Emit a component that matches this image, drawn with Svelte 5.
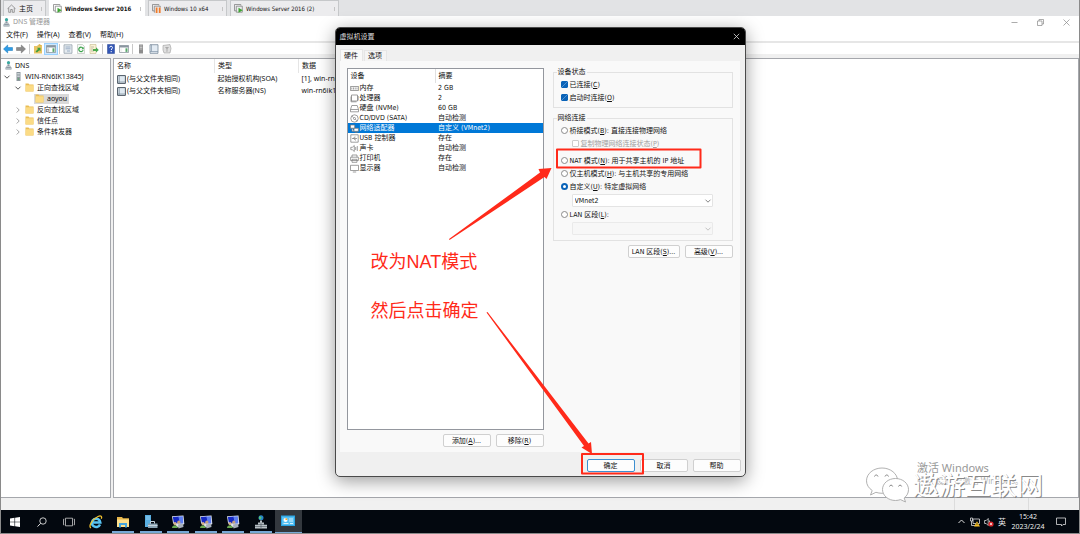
<script lang="ts">
  interface Device {
    icon: string;
    name: string;
    summary: string;
  }

  const vmTabs = [
    { title: "Windows Server 2016", state: "run" },
    { title: "Windows 10 x64", state: "pause" },
    { title: "Windows Server 2016 (2)", state: "run" },
  ];
  const menus = ["文件(F)", "操作(A)", "查看(V)", "帮助(H)"];
  const zones = ["反向查找区域", "信任点", "条件转发器"];
  const records = [
    { type: "起始授权机构(SOA)", data: "[1], win-rn6ik13845j" },
    { type: "名称服务器(NS)", data: "win-rn6ik13845j" },
  ];
  const tools = ["back", "forward", "|", "up", "pane", "|", "props", "refresh", "export", "|", "help", "pane2", "|", "server", "sheet", "filter"];
  const devices: Device[] = [
    { icon: "memory", name: "内存", summary: "2 GB" },
    { icon: "cpu", name: "处理器", summary: "2" },
    { icon: "disk", name: "硬盘 (NVMe)", summary: "60 GB" },
    { icon: "cd", name: "CD/DVD (SATA)", summary: "自动检测" },
    { icon: "net", name: "网络适配器", summary: "自定义 (VMnet2)" },
    { icon: "usb", name: "USB 控制器", summary: "存在" },
    { icon: "sound", name: "声卡", summary: "自动检测" },
    { icon: "printer", name: "打印机", summary: "存在" },
    { icon: "display", name: "显示器", summary: "自动检测" },
  ];
  const apps = ["ie", "explorer", "manager", "rdp", "rdp", "rdp", "dns", "panel"];

  let selected = $state(4);
  let activeTab = $state(0);
  let network = $state("custom");
  let connected = $state(true);
  let connectAtPowerOn = $state(true);
</script>

{#snippet key(text: string, letter: string, tail = "")}
  <span>{text}(<u>{letter}</u>){tail}</span>
{/snippet}

{#snippet chevron()}
  <svg class="chevron" viewBox="0 0 8 8"><path d="M1.5 2.7 4 5.2l2.5-2.5" /></svg>
{/snippet}

{#snippet folder()}
  <svg class="i9" viewBox="0 0 9 9"><path d="M.5.5h3l.8 1H8.500v7H.5z" fill="#e9bd55" /><path d="M1 2.300h7.500v6H.5z" fill="#fbdb85" /></svg>
{/snippet}

{#snippet dnsIcon()}
  <svg class="i9" viewBox="0 0 9 9">
    <circle cx="4.500" cy="1.700" r="1.600" fill="#3ba8a0" />
    <path d="M3.500 3.300h2v1.500h1v1.500h1V8.500h-6V6.300h1V4.800h1z" fill="#8a97a0" />
    <path d="M3 5.500h3M2 7.400h5" stroke="#dfe5e8" stroke-width=".6" />
  </svg>
{/snippet}

{#snippet serverIcon()}
  <svg class="i9" viewBox="0 0 9 9"><path d="M2.500 0h4v9h-4z" fill="#8d979d" /><path d="M3.200 1.500h2.600M3.200 3h2.600M3.200 4.500h2.600" stroke="#e4e9ec" stroke-width=".7" /><circle cx="4.500" cy="7" r=".7" fill="#58b368" /></svg>
{/snippet}

{#snippet toolIcon(name: string)}
  <svg class="i10" viewBox="0 0 10 10">
    {#if name === "back"}
      <path d="M.5 5 4.700 1v2.500h4.800v3H4.700V9z" fill="#2d9be6" stroke="#1677b8" stroke-width=".5" />
    {:else if name === "forward"}
      <path d="M9.500 5 5.300 1v2.500H.5v3h4.800V9z" fill="#8b8b8b" stroke="#6d6d6d" stroke-width=".5" />
    {:else if name === "up"}
      <path d="M1 2h3l1-1h4v8.500H1z" fill="#e8c464" /><path d="M2.500 7.500 5 5l-1-1.200h3.500V7.300l-1.200-1L4 8.600z" fill="#3e9d3e" /><path d="m5 1 2-1 1 2" fill="#d9a938" />
    {:else if name === "pane" || name === "pane2"}
      <path d="M.5 1.500h9v7h-9z" fill="#fff" stroke="#7f8b94" stroke-width=".7" /><path d="M.5 1.500h9v2h-9z" fill="#8a96a0" />
      <path d="M1.200 4.300h2v3.600h-2z" fill={name === "pane" ? "#c2cbd1" : "#f1f1f1"} /><path d="M6.500 4.300h2v3.600h-2z" fill="#59a86b" />
    {:else if name === "props"}
      <path d="M1 .8h8v8.500H1z" fill="#e4eaef" stroke="#8c99a5" stroke-width=".7" /><path d="M2.500 3h5M2.500 4.800h5M4 7h3" stroke="#7c97b5" stroke-width=".7" />
    {:else if name === "refresh"}
      <path d="M1.500.5h5l2 2v7h-7z" fill="#f6f8f6" stroke="#b2bbb2" stroke-width=".6" /><path d="M7 4.500a2.200 2.200 0 1 0 .1 1.600" fill="none" stroke="#39a34a" stroke-width="1.200" /><path d="M7.700 3v2.200H5.500z" fill="#39a34a" />
    {:else if name === "export"}
      <path d="M1 .5h6v9H1z" fill="#fbf3d5" stroke="#c4b98c" stroke-width=".6" /><path d="M2 3h3M2 5h2M2 7h3" stroke="#9a9a8a" stroke-width=".6" /><path d="M4 5h3V3.300L9.800 6 7 8.500V7H4z" fill="#4aaa4f" />
    {:else if name === "help"}
      <path d="M1.500.5h7v9h-7z" fill="#3155b5" stroke="#23408f" stroke-width=".5" /><path d="M3.700 3.600c0-1.900 2.800-1.800 2.800 0 0 1.100-1.300 1.200-1.300 2.400M5.200 7v1.200" fill="none" stroke="#fff" stroke-width="1" />
    {:else if name === "server"}
      <path d="M3 .5h4v9H3z" fill="#8c8c8c" /><path d="M3.600 2h2.800M3.600 3.500h2.800M3.600 5h2.800" stroke="#ddd" stroke-width=".7" />
    {:else if name === "sheet"}
      <path d="M1 .7h8v8.600H1z" fill="#e3ebf3" stroke="#66788b" stroke-width=".7" /><path d="M1 7.500h8M2.500.7v6.800" stroke="#8395a8" stroke-width=".7" />
    {:else}
      <path d="M1 1.500 8 .5l1 4-1 4.500H2L1 6z" fill="#dedede" stroke="#9c9c9c" stroke-width=".6" /><path d="M3 3h4L5.500 5v2.500l-1 .5V5z" fill="#aaa" />
    {/if}
  </svg>
{/snippet}

{#snippet deviceIcon(name: string)}
  <svg class="i9 line" viewBox="0 0 9 9">
    {#if name === "memory"}
      <path d="M.4 2.500h8.200v4H.4zM1.800 3.500v2M3.500 3.500v2M5.200 3.500v2M7 3.500v2" />
    {:else if name === "cpu"}
      <path d="M1.500 1h6v6h-6zM1 2.500v5.300h5.500M8.200 2v4.500" />
    {:else if name === "disk"}
      <path d="M.5 5.500h8v2.300h-8zM.5 5.500l1.300-4h5.400l1.300 4" />
    {:else if name === "cd"}
      <circle cx="4.500" cy="4.500" r="3.700" /><circle cx="4.500" cy="4.500" r="1" /><path d="M2 2.200 3.700 3.800M5.300 5.200 7 6.900" />
    {:else if name === "net"}
      <path d="M.5 1h4.200v3.200H.5zM4 4.300h4.400v3H4zM2 4.300v3h2M5 8.400h2.500" fill="#fff" />
    {:else if name === "usb"}
      <path d="M.8.8h7.400v7.400H.8zM2 4.500h5M3.500 4.500l1-1.500h1M4 4.500l1 1.500h1" />
    {:else if name === "sound"}
      <path d="M.8 3.300h1.500l2-1.800v6l-2-1.800H.8zM5.700 3v3M7.300 2v5" />
    {:else if name === "printer"}
      <path d="M2 3.200V1h5v2.200M.6 3.200h7.800v3.300H.6zM2 5.300h5v3H2z" />
    {:else}
      <path d="M.5 1.300h8v5.200h-8zM2.800 8h3.400" />
    {/if}
  </svg>
{/snippet}

{#snippet appIcon(name: string)}
  <svg class="i14" viewBox="0 0 14 14">
    {#if name === "ie"}
      <path d="M11 9.500A4.200 4.200 0 1 1 11.300 7.400H4" fill="none" stroke="#58c4f3" stroke-width="2.500" />
      <path d="M2 12.800C-.8 12 2.500 4.500 9 1.500c3-1.300 4.200 0 3.300 2.200" fill="none" stroke="#f2c230" stroke-width="1.300" />
    {:else if name === "explorer"}
      <path d="M1 2h5l1 1.200h6V12H1z" fill="#e8b64a" /><path d="M1 4.500h12V12H1z" fill="#fde08c" /><path d="M3 8h8v4.500H9V10H5v2.500H3z" fill="#45a5dc" />
    {:else if name === "manager"}
      <path d="M1 0h6v12H1z" fill="#59aee0" /><path d="M2 2h4M2 4h4" stroke="#a9daf5" stroke-width=".7" /><path d="M4 8.500h9.500V13H4z" fill="#8aa2b2" /><path d="M6.500 8.500v-2h4v2M4 10.500h9.500" fill="none" stroke="#c5d3dc" />
    {:else if name === "rdp"}
      <path d="M1 1.200 12.500.5l.8 8.500L7 12.500 2 8z" fill="#dfe4ee" /><path d="m1.800 1.900 6-.4 1.400 6.500L3 8.500z" fill="#1528c4" /><path d="m7.300 1.500 4.500-.3.500 7.100-3 .5z" fill="#5c7df0" />
      <path d="M7 9.500 12 8.500l.5 3.500-5 1.500z" fill="#a8b0ba" /><circle cx="4" cy="8.500" r="1.600" fill="#d6b48c" /><path d="M1 13c0-3.700 5.700-3.700 5.700 0z" fill="#69a84f" /><circle cx="7.800" cy="7.200" r="1.600" fill="#c2a080" />
    {:else if name === "dns"}
      <circle cx="7" cy="2.700" r="2.500" fill="#2786c8" /><path d="M5.500 1.200 7.500 2l-1 2.500-1.700-1z" fill="#61c86a" />
      <path d="M6 5.500h2v2h2v2.200h3V13.500H1V9.700h3V7.500h2z" fill="#b9c1c6" /><path d="M3.500 9.500h7M1 11.500h12M7 7.500v5.500" stroke="#4c565c" stroke-width=".6" />
    {:else}
      <path d="M0 1.500h14v10.500H0z" fill="#2aa4e3" /><path d="M1 2.700h12v8.300H1z" fill="#58c2f5" /><circle cx="4.500" cy="6" r="2" fill="#fff" /><path d="M4.500 6V4a2 2 0 0 1 2 2z" fill="#f6a52a" /><path d="M8 5h4M8 7h4M2.500 9.500h5M9 9.500h3" stroke="#e8f8ff" stroke-width=".9" />
    {/if}
  </svg>
{/snippet}

<div class="desktop">
  <nav class="vm-tabs">
    <button class="vm-tab home">
      <svg class="i9" viewBox="0 0 9 9"><path d="M.5 4.700 4.500 1l4 3.700M1.700 4v4.300h2V5.500h1.600v2.800h2V4" fill="none" stroke="#777" stroke-width=".7" /></svg>
      <span>主页</span>
      <i class="grip"></i>
    </button>
    {#each vmTabs as tab, i}
      <button class="vm-tab vm{i}" class:current={i === 0}>
        <svg class="i9" viewBox="0 0 9 9">
          <path d="M2.300 6.800H.5V.5h6.300v1M2.300 2.200h6v6h-6z" fill="none" stroke="#777" stroke-width=".7" />
          {#if tab.state === "run"}
            <path d="m4.500 3.700 4.300 2.500-4.300 2.500z" fill="#3fa535" />
          {:else}
            <path d="M3 3.500h6V9H3z" fill="#ececee" /><path d="M3.700 3.500h1.800V9H3.700zM6.800 3.500h1.800V9H6.800z" fill="#ef7b2b" />
          {/if}
        </svg>
        <span>{tab.title}</span>
        <i class="grip"></i>
      </button>
    {/each}
  </nav>

  <main class="mmc">
    <header class="mmc-title">
      {@render dnsIcon()}
      <span class="mmc-name">DNS 管理器</span>
      <button class="win-btn" aria-label="最小化"><svg class="i9" viewBox="0 0 9 9"><path d="M1.500 4.500h6" /></svg></button>
      <button class="win-btn" aria-label="还原"><svg class="i9" viewBox="0 0 9 9"><path d="M1.500 3h4.500v4.500H1.500zM3 3V1.500h4.500V6H6" /></svg></button>
      <button class="win-btn" aria-label="关闭"><svg class="i9" viewBox="0 0 9 9"><path d="m1.500 1.500 6 6m0-6-6 6" /></svg></button>
    </header>
    <div class="menubar">
      {#each menus as menu}
        <button>{menu}</button>
      {/each}
    </div>
    <div class="toolbar">
      {#each tools as tool}
        {#if tool === "|"}
          <i class="sep"></i>
        {:else}
          <button class="tool" class:pressed={tool === "pane"} aria-label={tool}>{@render toolIcon(tool)}</button>
        {/if}
      {/each}
    </div>

    <div class="panes">
      <ul class="tree">
        <li class="lv0">{@render dnsIcon()}<span>DNS</span></li>
        <li class="lv1">{@render chevron()}{@render serverIcon()}<span>WIN-RN6IK13845J</span></li>
        <li class="lv2">{@render chevron()}{@render folder()}<span>正向查找区域</span></li>
        <li class="lv3"><span class="picked">{@render folder()}<span>aoyou</span></span></li>
        {#each zones as zone}
          <li class="lv2 closed">{@render chevron()}{@render folder()}<span>{zone}</span></li>
        {/each}
      </ul>
      <div class="records">
        <table>
          <thead>
            <tr><th class="c-name">名称</th><th class="c-type">类型</th><th>数据</th></tr>
          </thead>
          <tbody>
            {#each records as record}
              <tr>
                <td><span class="cell"><svg class="i9" viewBox="0 0 9 9"><path d="M.6.6h7.800v7.800H.6z" fill="#dfe9f1" stroke="#4b5661" /><path d="M2.300.8v7.500M1 7h7" stroke="#7d8c99" stroke-width=".7" /></svg>(与父文件夹相同)</span></td>
                <td>{record.type}</td>
                <td>{record.data}</td>
              </tr>
            {/each}
          </tbody>
        </table>
      </div>
    </div>
    <div class="status"><span></span><span></span></div>
  </main>

  <footer class="taskbar">
    <div class="system">
      <button aria-label="开始"><svg class="i10" viewBox="0 0 10 10"><path d="M0 1.400 4.500.8v3.900H0zM5.100.7 10 0v4.700H5.100zM0 5.300h4.500v3.900L0 8.600zM5.100 5.300H10V10l-4.900-.7z" fill="#fff" /></svg></button>
      <button aria-label="搜索"><svg class="i10" viewBox="0 0 10 10"><circle cx="6" cy="4" r="3.200" fill="none" stroke="#ddd" stroke-width=".9" /><path d="M3.700 6.300.5 9.600" stroke="#ddd" stroke-width="1" /></svg></button>
      <button aria-label="任务视图"><svg class="i12" viewBox="0 0 12 12"><path d="M2.500 2.200h7v7.600h-7zM1.300 3.200H.5v5.600h.8M10.700 3.200h.8v5.600h-.8" fill="none" stroke="#ccc" stroke-width=".8" /></svg></button>
    </div>
    <div class="apps">
      {#each apps as app, i}
        <button class="app" class:running={i > 0 && i < 7} class:active={i === 7} aria-label={app}>{@render appIcon(app)}</button>
      {/each}
    </div>
    <div class="tray">
      <svg class="i9" viewBox="0 0 9 9"><path d="m1.500 6 3-3 3 3" fill="none" stroke="#ddd" /></svg>
      <svg class="i10" viewBox="0 0 10 10"><path d="M3 2h6.500v4.500H3zM.5 1h2v3h-2zM1.500 4v4.500H5" fill="none" stroke="#ddd" stroke-width=".8" /><path d="m7 4.300 3 5.200H4z" fill="#f5bd25" /><path d="M7 6v2" stroke="#332" stroke-width=".7" /></svg>
      <svg class="i10" viewBox="0 0 10 10"><path d="M.6 3.500h1.600l2-2v7l-2-2H.6zM5.500 3.500v2" fill="none" stroke="#ddd" stroke-width=".8" /><circle cx="7" cy="7" r="2.600" fill="#d9282d" /><path d="m6 6 2 2m0-2L6 8" stroke="#fff" stroke-width=".7" /></svg>
      <span class="ime">英</span>
      <div class="clock"><span>15:42</span><span>2023/2/24</span></div>
      <svg class="i10" viewBox="0 0 10 10"><path d="M.5 1h9v6.500H7L5.500 9V7.500h-5z" fill="none" stroke="#ddd" stroke-width=".8" /></svg>
    </div>
  </footer>

  <div class="activation">
    <p class="act-title">激活 Windows</p>
    <p class="act-text">转到“设置”以激活 Windows。</p>
  </div>
  <div class="brand">
    <svg class="wechat" viewBox="0 0 44 38">
      <g fill="#fff" stroke="#a8a8a8" stroke-width=".9">
        <path d="M17 2C8.500 2 1.500 7.600 1.500 14.800c0 4 2.200 7.300 5.700 9.700L5.500 29l5.400-2.700c2 .6 4 1 6.200 1 8.500 0 15.500-5.600 15.500-12.600S25.500 2 17 2z" />
        <path d="M30.500 12.500c-7.200 0-13 4.900-13 11s5.800 11 13 11c1.800 0 3.500-.4 5-.9l5 2.400-1.300-4c2.700-2 4.300-5 4.300-8.500 0-6.100-5.800-11-13-11z" />
        <path d="M9.500 10.500c.5-2 3-2 3.500 0M20 10.500c.5-2 3-2 3.500 0M24.500 20.500c.4-1.800 2.800-1.800 3.200 0M33.500 20.500c.4-1.800 2.800-1.800 3.200 0" stroke="#777" fill="none" />
      </g>
    </svg>
    <span>遨游互联网</span>
  </div>

  <form class="dialog" onsubmit={(e) => e.preventDefault()}>
    <div class="dlg-title">
      <span>虚拟机设置</span>
      <button type="button" class="dlg-close" aria-label="关闭"><svg class="i9" viewBox="0 0 9 9"><path d="m1.800 1.800 5.400 5.400m0-5.400L1.800 7.200" stroke="#ddd" stroke-width=".8" /></svg></button>
    </div>
    <div class="dlg-tabs">
      {#each ["硬件", "选项"] as label, i}
        <button type="button" class="dlg-tab" class:active={activeTab === i} onclick={() => activeTab = i}>{label}</button>
      {/each}
    </div>
    <div class="page">
      <section class="left">
        <div class="list">
          <table>
            <thead>
              <tr><th class="c-dev">设备</th><th>摘要</th></tr>
            </thead>
            <tbody>
              {#each devices as device, i}
                <tr class:selected={selected === i} onclick={() => selected = i}>
                  <td><span class="cell">{@render deviceIcon(device.icon)}{device.name}</span></td>
                  <td>{device.summary}</td>
                </tr>
              {/each}
            </tbody>
          </table>
        </div>
        <div class="btns">
          <button type="button" class="btn">{@render key("添加", "A", "...")}</button>
          <button type="button" class="btn">{@render key("移除", "R")}</button>
        </div>
      </section>
      <section class="right">
        <fieldset>
          <legend>设备状态</legend>
          <label class="opt"><input type="checkbox" bind:checked={connected} />{@render key("已连接", "C")}</label>
          <label class="opt"><input type="checkbox" bind:checked={connectAtPowerOn} />{@render key("启动时连接", "O")}</label>
        </fieldset>
        <fieldset class="network">
          <legend>网络连接</legend>
          <label class="opt"><input type="radio" bind:group={network} value="bridged" />{@render key("桥接模式", "B", ": 直接连接物理网络")}</label>
          <label class="opt sub"><input type="checkbox" disabled />{@render key("复制物理网络连接状态", "P")}</label>
          <label class="opt nat"><input type="radio" bind:group={network} value="nat" />{@render key("NAT 模式", "N", ": 用于共享主机的 IP 地址")}</label>
          <label class="opt"><input type="radio" bind:group={network} value="host" />{@render key("仅主机模式", "H", ": 与主机共享的专用网络")}</label>
          <label class="opt"><input type="radio" bind:group={network} value="custom" />{@render key("自定义", "U", ": 特定虚拟网络")}</label>
          <div class="select">
            <select aria-label="特定虚拟网络"><option>VMnet2</option></select>
            {@render chevron()}
          </div>
          <label class="opt lan"><input type="radio" bind:group={network} value="lan" />{@render key("LAN 区段", "L", ":")}</label>
          <div class="select off">
            <select aria-label="LAN 区段" disabled></select>
            {@render chevron()}
          </div>
        </fieldset>
        <div class="btns">
          <button type="button" class="btn wide">{@render key("LAN 区段", "S", "...")}</button>
          <button type="button" class="btn">{@render key("高级", "V", "...")}</button>
        </div>
      </section>
    </div>
    <div class="btns actions">
      <button type="submit" class="btn primary">确定</button>
      <button type="button" class="btn">取消</button>
      <button type="button" class="btn">帮助</button>
    </div>

    <!-- tutorial marks drawn over the dialog -->
    <div class="marks">
      <svg viewBox="0 0 411 450">
        <path d="M114 212 205 145.500l-1.500-3.500 13-1-5 11-2-2L114.500 213z" fill="#ff2a1a" />
        <path d="M152.500 285 253.500 416.500l2.500-1.500 1 12-10.500-6.500 2.500-1.500L151.500 285.500z" fill="#ff2a1a" />
        <path d="M222 122.500h143.500v18H222zM247 427h61v19.500h-61z" fill="none" stroke="#ff2a1a" stroke-width="2" stroke-linejoin="round" />
      </svg>
      <p class="note nat-note">改为NAT模式</p>
      <p class="note ok-note">然后点击确定</p>
    </div>
  </form>
</div>

<style>
  :global(body) {
    margin: 0;
  }
  .desktop {
    position: relative;
    display: flex;
    flex-direction: column;
    min-height: 100vh;
    box-sizing: border-box;
    border: solid #8a8a8a;
    border-width: 0 1px 1px;
    overflow: hidden;
    background: #f0f0f0;
    color: #111;
    font-family: "Noto Sans", "Noto Sans CJK SC", sans-serif;
    font-size: 7px;
    line-height: 10px;
  }
  button,
  select {
    margin: 0;
    padding: 0;
    border: none;
    background: none;
    color: inherit;
    font: inherit;
  }
  p {
    margin: 0;
  }
  svg {
    display: block;
    flex: none;
  }
  table {
    width: 100%;
    border-collapse: collapse;
    table-layout: fixed;
  }
  th,
  td {
    padding: 0;
    text-align: left;
    font-weight: 400;
    white-space: nowrap;
    overflow: hidden;
  }
  .i9 {
    width: 9px;
    height: 9px;
  }
  .i10 {
    width: 10px;
    height: 10px;
  }
  .i12 {
    width: 12px;
    height: 12px;
  }
  .i14 {
    width: 14px;
    height: 14px;
  }
  .chevron {
    width: 8px;
    height: 8px;
    fill: none;
    stroke: #444;
    stroke-width: 0.9;
  }

  .vm-tabs {
    display: flex;
    gap: 3px;
    height: 16px;
    padding-left: 2px;
    background: #e2e3e5;
  }
  .vm-tab {
    display: flex;
    align-items: center;
    gap: 3px;
    box-sizing: border-box;
    padding: 0 3px;
    border: 1px solid #c6c8ca;
    border-bottom: none;
    background: #ececee;
    font-family: "DejaVu Sans Condensed", "Noto Sans CJK SC", sans-serif;
    font-size: 6px;
    white-space: nowrap;
  }
  .home {
    width: 43px;
    font-size: 7px;
  }
  .vm0 {
    width: 96px;
  }
  .vm1 {
    width: 79px;
  }
  .vm2 {
    width: 109px;
  }
  .vm-tab.current {
    background: #fff;
    border-color: #fff;
    font-weight: 700;
  }
  .grip {
    width: 2px;
    height: 4px;
    margin-left: auto;
    border-right: 1px solid #c4c4c4;
  }

  .mmc {
    flex: 1;
    display: flex;
    flex-direction: column;
  }
  .mmc-title {
    display: flex;
    align-items: center;
    height: 12px;
    padding-left: 1px;
    background: #fff;
    color: #999;
  }
  .mmc-name {
    flex: 1;
    margin-left: 2px;
  }
  .win-btn {
    display: flex;
    justify-content: center;
    width: 26px;
    fill: none;
    stroke: #888;
    stroke-width: 0.7;
  }
  .menubar {
    display: flex;
    gap: 9px;
    height: 13px;
    padding-left: 5px;
    background: #fff;
    border-bottom: 2px solid #e6e6e6;
  }
  .toolbar {
    display: flex;
    align-items: center;
    gap: 1px;
    height: 11px;
    padding-left: 1px;
    background: #fff;
    border-bottom: 4px solid #f0f0f0;
  }
  .tool {
    display: flex;
    justify-content: center;
    width: 12px;
  }
  .tool.pressed {
    background: #cce8ff;
    outline: 1px solid #99d1ff;
  }
  .sep {
    width: 1px;
    height: 10px;
    margin: 0 1px;
    background: #c8c8c8;
  }
  .panes {
    flex: 1;
    display: grid;
    grid-template-columns: 110px 1fr;
    gap: 2px;
  }
  .tree,
  .records {
    border: 1px solid #a5a7ac;
    background: #fff;
  }
  .tree {
    margin: 0;
    padding: 1px 0 0;
    border-left: none;
    list-style: none;
  }
  .tree li {
    display: flex;
    align-items: center;
    gap: 2px;
    height: 11px;
    white-space: nowrap;
  }
  .lv0 {
    padding-left: 3px;
  }
  .lv1 {
    padding-left: 2px;
  }
  .lv1 .i9,
  .lv2 .i9 {
    margin-left: 1px;
  }
  .lv2 {
    padding-left: 13px;
  }
  .lv2 span {
    margin-left: 1px;
  }
  .lv3 {
    padding-left: 33px;
  }
  .closed .chevron {
    transform: rotate(-90deg);
    stroke: #999;
  }
  .picked {
    display: flex;
    align-items: center;
    gap: 3px;
    padding: 0 2px 0 1px;
    background: #d9d9d9;
  }
  .records th {
    height: 14px;
    padding-left: 3px;
    border-right: 1px solid #e5e5e5;
  }
  .records th:last-child {
    border-right: none;
  }
  .records td {
    height: 12px;
    padding-left: 3px;
  }
  .c-name {
    width: 97px;
  }
  .c-type {
    width: 80px;
  }
  .cell {
    display: flex;
    align-items: center;
    gap: 1px;
  }
  .status {
    display: flex;
    justify-content: flex-end;
    height: 12px;
  }
  .status span {
    width: 73px;
    border-left: 1px solid #dcdcdc;
  }
  .status span:last-child {
    width: 50px;
  }

  .taskbar {
    display: flex;
    height: 23px;
    background: #03080f;
    color: #eee;
  }
  .system,
  .apps,
  .tray {
    display: flex;
    align-items: center;
  }
  .system button {
    display: flex;
    justify-content: center;
    width: 27px;
  }
  .apps {
    width: 220px;
    align-items: stretch;
  }
  .app {
    flex: 1;
    display: flex;
    align-items: center;
    justify-content: center;
  }
  .app.running {
    background: linear-gradient(#76a9d6, #76a9d6) center bottom / 22px 2px no-repeat;
  }
  .app.active {
    background: #33383e;
    border-bottom: 1px solid #76a9d6;
  }
  .tray {
    gap: 4px;
    margin-left: auto;
    padding-right: 13px;
  }
  .ime {
    font-size: 8px;
  }
  .clock {
    display: flex;
    flex-direction: column;
    width: 36px;
    margin-right: 6px;
    text-align: center;
  }

  .activation {
    position: absolute;
    right: 46px;
    bottom: 46px;
    width: 116px;
    color: #999;
  }
  .act-title {
    font-size: 11px;
    line-height: 15px;
  }
  .act-text {
    color: #b4b4b4;
    font-size: 8px;
    line-height: 12px;
    white-space: nowrap;
  }
  .brand {
    position: absolute;
    right: 36px;
    bottom: 29px;
    display: flex;
    align-items: center;
    gap: 4px;
    color: #fff;
    font-size: 26px;
    font-weight: 400;
    line-height: 36px;
    text-shadow: 1px 1px 0 #888;
  }
  .wechat {
    width: 44px;
    height: 38px;
  }

  .dialog {
    position: absolute;
    top: 27px;
    left: 0;
    right: 0;
    width: 411px;
    margin: 0 auto;
    box-sizing: border-box;
    border: 1px solid #4a4a4a;
    border-radius: 5px;
    background: #f0f0f0;
    box-shadow: 0 4px 18px rgba(0, 0, 0, 0.4);
    font-family: "DejaVu Sans Condensed", "Noto Sans CJK SC", sans-serif;
  }
  .dlg-title {
    display: flex;
    align-items: center;
    justify-content: space-between;
    height: 17px;
    padding: 0 4px;
    border-radius: 4px 4px 0 0;
    background: #000;
    color: #ddd;
  }
  .dlg-tabs {
    display: flex;
    align-items: flex-end;
    gap: 1px;
    padding: 4px 4px 0;
  }
  .dlg-tab {
    width: 23px;
    height: 11px;
    background: #f4f4f4;
    border: 1px solid #e6e6e6;
    border-bottom: none;
  }
  .dlg-tab.active {
    height: 12px;
    background: #f9f9f9;
  }
  .page {
    display: grid;
    grid-template-columns: 197px 180px;
    gap: 9px;
    margin: 0 5px 0 4px;
    padding: 7px;
    padding-bottom: 5px;
    background: #f9f9f9;
  }
  .list {
    box-sizing: border-box;
    height: 362px;
    border: 1px solid #94979e;
    background: #fff;
  }
  .list th {
    height: 14px;
    padding-left: 3px;
  }
  .list .c-dev {
    width: 84px;
    border-right: 1px solid #e0e0e0;
  }
  .list td {
    height: 10px;
    padding-left: 2px;
  }
  .list td:last-child {
    padding-left: 3px;
  }
  .list tr.selected {
    background: #0078d7;
    color: #fff;
  }
  .line {
    fill: none;
    stroke: #777;
    stroke-width: 0.7;
  }
  .list .cell {
    height: 10px;
  }
  .btns {
    display: flex;
    justify-content: flex-end;
    gap: 5px;
    margin-top: 4px;
  }
  .btn {
    box-sizing: border-box;
    width: 48px;
    height: 13px;
    border: 1px solid #d0d0d0;
    border-radius: 2px;
    background: #fdfdfd;
    white-space: nowrap;
  }
  .btn.wide {
    width: 52px;
  }
  .btn.primary {
    border-color: #3c8fd0;
  }
  fieldset {
    min-width: 0;
    margin: 0;
    padding: 2px 7px 3px;
    border: 1px solid #e2e2e2;
  }
  fieldset.network {
    margin-top: 6px;
    padding-bottom: 5px;
  }
  legend {
    margin-left: -4px;
    padding: 0 1px;
    line-height: 8px;
  }
  .opt {
    display: flex;
    align-items: center;
    gap: 2px;
    height: 13px;
    white-space: nowrap;
  }
  .opt.sub {
    margin-left: 11px;
    color: #a0a0a0;
  }
  .opt.nat {
    margin-top: 4px;
  }
  .opt.lan {
    margin-top: 1px;
  }
  .opt input {
    flex: none;
    appearance: none;
    box-sizing: border-box;
    width: 7px;
    height: 7px;
    margin: 0;
    border: 1px solid #8a8a8a;
    border-radius: 1px;
    background: #fff;
  }
  .opt input[type="radio"] {
    border-radius: 50%;
  }
  .opt input[type="radio"]:checked {
    border: 2px solid #0a63b8;
  }
  .opt input[type="checkbox"]:checked {
    border-color: #0a63b8;
    background: linear-gradient(135deg, #0a63b8 45%, #6ea6dc 52%, #0a63b8 60%);
  }
  .opt input:disabled {
    border-color: #ccc;
  }
  .select {
    position: relative;
    width: 141px;
    margin: 1px 0 0 11px;
  }
  .select select {
    display: block;
    appearance: none;
    box-sizing: border-box;
    width: 100%;
    height: 13px;
    padding: 0 2px;
    border: 1px solid #e4e4e4;
    border-radius: 1px;
    background: #fff;
  }
  .select .chevron {
    position: absolute;
    top: 3px;
    right: 1px;
    stroke: #777;
  }
  .select.off select {
    background: #f7f7f7;
  }
  .select.off .chevron {
    stroke: #bbb;
  }
  .actions {
    margin: 0;
    padding: 7px 4px 4px;
  }

  .marks {
    position: absolute;
    top: -1px;
    left: -1px;
    pointer-events: none;
  }
  .marks svg {
    width: 411px;
    height: 450px;
  }
  .note {
    position: absolute;
    left: 36px;
    color: #ff2a1a;
    font-family: "Liberation Sans", "Noto Sans CJK SC", sans-serif;
    font-size: 18px;
    line-height: 24px;
    white-space: nowrap;
  }
  .nat-note {
    top: 223px;
  }
  .ok-note {
    top: 272px;
  }
</style>
